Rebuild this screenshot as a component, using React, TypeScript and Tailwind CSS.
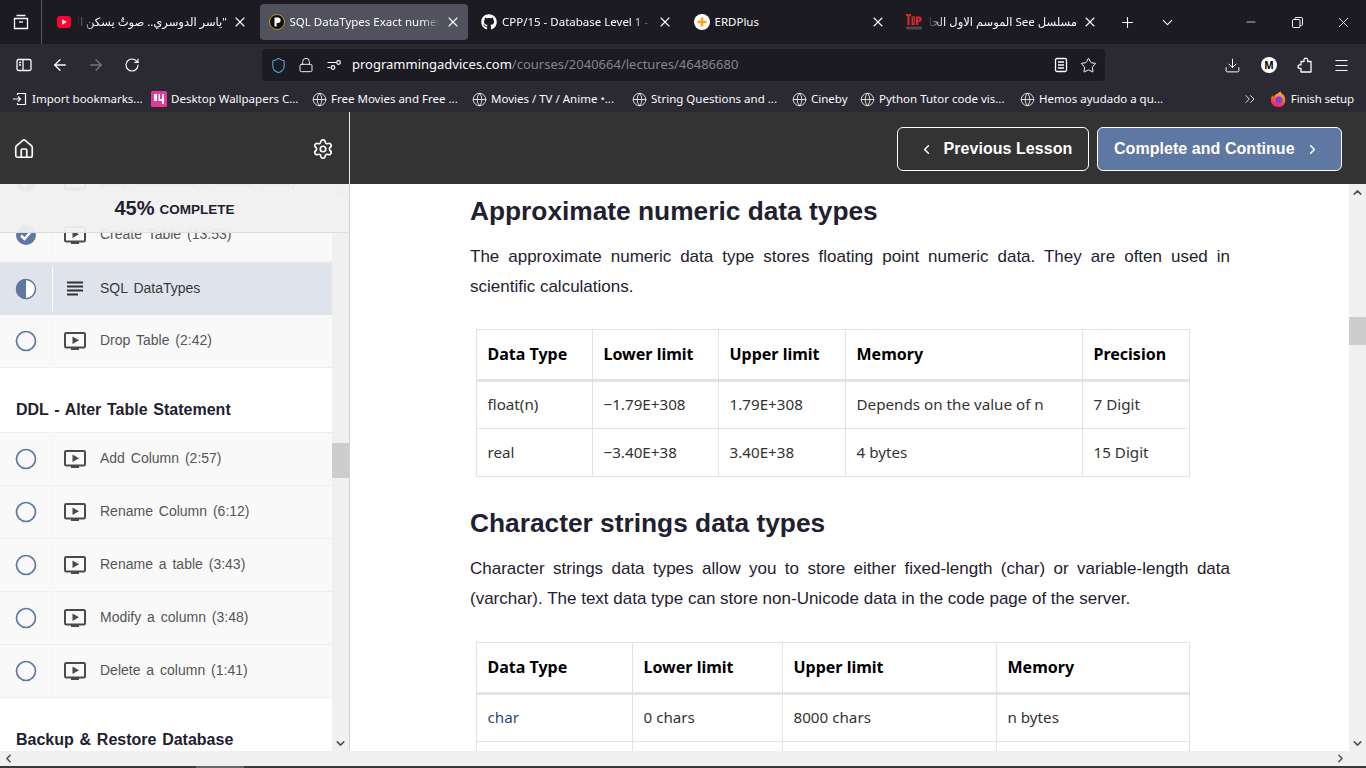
import React from "react";
import {
  ArrowLeft,
  ArrowRight,
  ChevronDown,
  ChevronLeft,
  ChevronRight,
  ChevronUp,
  ChevronsRight,
  Download,
  Globe,
  House,
  Lock,
  Menu,
  Minus,
  Plus,
  RotateCw,
  Settings,
  Shield,
  Star,
  X,
} from "lucide-react";
import { FaGithub } from "react-icons/fa";

const chromeFont = "font-['Noto_Sans','DejaVu_Sans',sans-serif]";

const YoutubeIcon = () => (
  <svg width="16" height="16" viewBox="0 0 16 16" className="shrink-0">
    <rect x="1" y="2" width="14" height="12" rx="3" fill="#ff0033" />
    <path d="M6.2 5.2 10.8 8l-4.6 2.8z" fill="#fff" />
  </svg>
);

const PIcon = () => (
  <svg width="16" height="16" viewBox="0 0 16 16" className="shrink-0">
    <circle cx="8" cy="8" r="7.5" fill="#111" stroke="#b8962e" strokeWidth="1" />
    <path d="M5.5 3.5h3.4a2.7 2.7 0 0 1 0 5.4H7.6v3.6H5.5z" fill="#fff" />
  </svg>
);

const ErdIcon = () => (
  <svg width="16" height="16" viewBox="0 0 16 16" className="shrink-0">
    <circle cx="8" cy="8" r="8" fill="#fff" />
    <path d="M8 3.5v9M3.5 8h9" stroke="#f5a623" strokeWidth="2.6" />
  </svg>
);

const TopIcon = () => (
  <svg width="16" height="16" viewBox="0 0 16 16" className="shrink-0">
    <path d="M0 0h5v2H3.600v9H1.400V2H0zM5.500 2.500h3.500v8.500H5.500zM7 4v5.500h.6V4zM10 2.500h3.500a2 2 0 0 1 2 2v1.500a2 2 0 0 1-2 2h-1.300v3H10zM12.200 4v2.500h1V4z" fill="#d9272e" fillRule="evenodd" />
    <rect x="0" y="12.500" width="16" height="3" rx="1" fill="#4a4a4f" />
  </svg>
);

const WallpaperIcon = () => (
  <svg width="16" height="16" viewBox="0 0 16 16" className="shrink-0">
    <rect width="16" height="16" rx="1.5" fill="#e5399a" />
    <path d="M3 3h3v7H3zM7.5 3H9v5h2V3h2v10h-2V10H7.500z" fill="#fff" />
  </svg>
);

const FirefoxIcon = () => (
  <svg width="16" height="16" viewBox="0 0 16 16" className="shrink-0">
    <defs>
      <linearGradient id="fx" x1="0.7" y1="0" x2="0.3" y2="1">
        <stop offset="0" stopColor="#ffbd2e" />
        <stop offset="0.55" stopColor="#ff5634" />
        <stop offset="1" stopColor="#e31587" />
      </linearGradient>
    </defs>
    <path d="M9.500 0.500c.4 1.800 1.600 2.300 3 3.600A7.300 7.300 0 1 1 1.500 4.300c.3 1 .7 1.400 1.300 1.700C3 3.500 6.500 3 9.500.5z" fill="url(#fx)" />
    <circle cx="8" cy="9" r="3.400" fill="#7542e5" />
  </svg>
);

const ImportIcon = () => (
  <svg width="16" height="16" viewBox="0 0 16 16" fill="none" stroke="#fbfbfe" strokeWidth="1.2" className="shrink-0">
    <path d="M5.500 4V2.500h8v11h-8V12" />
    <path d="M1 8h7.500M6 5.500 8.500 8 6 10.500" />
  </svg>
);

const ReaderIcon = () => (
  <svg width="16" height="16" viewBox="0 0 16 16" fill="none" stroke="#fbfbfe" strokeWidth="1.3">
    <rect x="2.500" y="1.500" width="11" height="13" rx="1.500" />
    <path d="M5 5h6M5 8h6M5 11h6" />
  </svg>
);

const TuneIcon = () => (
  <svg width="16" height="16" viewBox="0 0 16 16" fill="none" stroke="#fbfbfe" strokeWidth="1.2">
    <path d="M1.500 5.500h8.500M1.500 10.500h3" />
    <circle cx="12.500" cy="5.500" r="1.800" />
    <circle cx="7" cy="10.500" r="1.800" />
  </svg>
);

const SidebarIcon = () => (
  <svg width="16" height="16" viewBox="0 0 16 16" fill="none" stroke="#fbfbfe" strokeWidth="1.300">
    <rect x="1" y="2.500" width="14" height="11" rx="1.500" />
    <path d="M7 2.500v11M3 5.500h2M3 8h2" />
  </svg>
);

const TabsIcon = () => (
  <svg width="16" height="16" viewBox="0 0 16 16" fill="none" stroke="#fbfbfe" strokeWidth="1.300">
    <path d="M3.500 1.500h9M1.500 4.500h13v10h-13z" />
    <path d="M6 8h4" />
  </svg>
);

const RestoreIcon = () => (
  <svg width="11" height="11" viewBox="0 0 11 11" fill="none" stroke="#fbfbfe" strokeWidth="1">
    <rect x="0.500" y="2.500" width="7.500" height="8" rx="1" />
    <path d="M3 2.500V1.500a1 1 0 0 1 1-1h5.500a1 1 0 0 1 1 1v6a1 1 0 0 1-1 1H8" />
  </svg>
);

const PuzzleIcon = () => (
  <svg width="16" height="17" viewBox="0 0 16 17" fill="none" stroke="#fbfbfe" strokeWidth="1.300" strokeLinejoin="round">
    <path d="M4 4.500h3V3a1.800 1.800 0 0 1 3.600 0v1.500h3.400v10.500H4v-3.500H2.800a1.800 1.800 0 0 1 0-3.600H4z" />
  </svg>
);

const VideoIcon = () => (
  <svg width="22" height="20" viewBox="0 0 22 20" className="shrink-0">
    <rect x="1" y="2" width="20" height="14.500" rx="1.200" fill="none" stroke="#4a4a4a" strokeWidth="2" />
    <path d="M8.500 5.500 15 9.300 8.500 13z" fill="#4a4a4a" />
    <rect x="7" y="17" width="8" height="2" fill="#4a4a4a" />
  </svg>
);

const TextIcon = () => (
  <svg width="22" height="20" viewBox="0 0 22 20" className="shrink-0">
    <path d="M3 3.500h16M3 7.500h16M3 11.500h16M3 15.500h11" stroke="#333" strokeWidth="2" />
  </svg>
);

const StatusCircle = ({ status }: { status: "done" | "half" | "open" }) => (
  <svg width="22" height="22" viewBox="0 0 22 22" className="shrink-0">
    {status === "done" && (
      <>
        <circle cx="11" cy="11" r="10" fill="#5f77a3" />
        <path d="M6 11.500 9.500 15 16 7.500" fill="none" stroke="#fff" strokeWidth="2.500" />
      </>
    )}
    {status === "half" && (
      <>
        <circle cx="11" cy="11" r="9.500" fill="#fff" stroke="#5f77a3" strokeWidth="1.500" />
        <path d="M11 1a10 10 0 0 0 0 20z" fill="#5f77a3" />
      </>
    )}
    {status === "open" && <circle cx="11" cy="11" r="9.500" fill="none" stroke="#5f77a3" strokeWidth="1.700" />}
  </svg>
);

const Tab = ({
  icon,
  title,
  active,
  rtl,
  fade = true,
}: {
  icon: React.ReactNode;
  title: string;
  active?: boolean;
  rtl?: boolean;
  fade?: boolean;
}) => (
  <div
    className={`w-[208px] h-9 shrink-0 rounded flex items-center pl-[9px] pr-[7px] gap-[5px] ${
      active ? "bg-[#52525e]" : ""
    }`}
  >
    {icon}
    <div
      dir={rtl ? "rtl" : "ltr"}
      className={`flex-1 min-w-0 whitespace-nowrap text-[11.500px] text-[#fbfbfe] ${
        fade
          ? rtl
            ? "[mask-image:linear-gradient(to_left,black_88%,transparent)]"
            : "[mask-image:linear-gradient(to_right,black_88%,transparent)]"
          : ""
      }`}
    >
      {title}
    </div>
    <X size={16} strokeWidth={1.600} className="shrink-0 text-[#fbfbfe]" />
  </div>
);

const globe = <Globe size={15} strokeWidth={1.300} className="shrink-0 mx-[0.500px]" />;

const bookmarks = [
  { icon: <ImportIcon />, label: "Import bookmarks...", w: "w-[119px]" },
  { icon: <WallpaperIcon />, label: "Desktop Wallpapers C...", w: "w-[140px]" },
  { icon: globe, label: "Free Movies and Free ...", w: "w-[140px]" },
  { icon: globe, label: "Movies / TV / Anime •...", w: "w-[140px]" },
  { icon: globe, label: "String Questions and ...", w: "w-[140px]" },
  { icon: globe, label: "Cineby", w: "w-[48px]" },
  { icon: globe, label: "Python Tutor code vis...", w: "w-[140px]" },
  { icon: globe, label: "Hemos ayudado a qu...", w: "w-[125px]" },
];

const BrowserChrome = () => (
  <div className={`${chromeFont} text-[#fbfbfe] shrink-0`}>
    <div className="h-11 bg-[#1c1b22] flex items-center">
      <div className="w-[42px] h-full flex items-center justify-center border-r border-[#55555e] my-2 shrink-0">
        <TabsIcon />
      </div>
      <div className="flex items-center gap-[4.500px] pl-[5px]">
        <Tab rtl icon={<YoutubeIcon />} title={'"ياسر الدوسري.. صوتٌ يسكن ال'} />
        <Tab active icon={<PIcon />} title="SQL DataTypes Exact numeric" />
        <Tab icon={<FaGithub size={16} className="shrink-0 text-white" />} title="CPP/15 - Database Level 1 - S" />
        <Tab icon={<ErdIcon />} title="ERDPlus" fade={false} />
        <Tab rtl icon={<TopIcon />} title="مسلسل See الموسم الاول الحا" />
      </div>
      <Plus size={17} strokeWidth={1.500} className="ml-[14px]" />
      <ChevronDown size={17} strokeWidth={1.500} className="ml-[23px]" />
      <div className="ml-auto flex items-center h-full">
        <div className="w-[46px] flex justify-center"><Minus size={14} strokeWidth={1.200} /></div>
        <div className="w-[46px] flex justify-center"><RestoreIcon /></div>
        <div className="w-[46px] flex justify-center"><X size={17} strokeWidth={1.200} /></div>
      </div>
    </div>

    <div className="h-[42px] bg-[#2b2a33] flex items-center">
      <div className="flex items-center w-[262px] pl-4 shrink-0">
        <SidebarIcon />
        <ArrowLeft size={18} strokeWidth={1.700} className="ml-[19px]" />
        <ArrowRight size={18} strokeWidth={1.700} className="ml-[18px] text-[#76757c]" />
        <RotateCw size={16} strokeWidth={1.700} className="ml-[19px]" />
      </div>
      <div className="w-[843px] h-8 bg-[#1c1b22] rounded flex items-center pl-[8px] pr-[8px]">
        <Shield size={17} strokeWidth={1.500} className="text-[#4fa8dc]" />
        <Lock size={16} strokeWidth={1.400} className="ml-[11px]" />
        <div className="ml-[12px]"><TuneIcon /></div>
        <span className="ml-[10px] text-[13px] whitespace-nowrap">
          programmingadvices.com<span className="text-[#85848c]">/courses/2040664/lectures/46486680</span>
        </span>
        <div className="ml-auto"><ReaderIcon /></div>
        <Star size={17} strokeWidth={1.400} className="ml-[11px]" />
      </div>
      <div className="flex-1 flex items-center justify-end pr-[16px] gap-[20px]">
        <Download size={17} strokeWidth={1.400} />
        <div className="w-4 h-4 rounded-full bg-white text-black text-[10px] font-bold flex items-center justify-center">M</div>
        <PuzzleIcon />
        <Menu size={17} strokeWidth={1.400} />
      </div>
    </div>

    <div className="h-[26px] bg-[#2b2a33] flex items-center pl-[12px] pr-[12px] text-[11.500px]">
      {bookmarks.map((b) => (
        <div key={b.label} className="flex items-center gap-[4px]">
          {b.icon}
          <span className={`${b.w} whitespace-nowrap`}>{b.label}</span>
        </div>
      ))}
      <ChevronsRight size={16} strokeWidth={1.300} className="ml-auto" />
      <div className="flex items-center gap-[4px] ml-[13px]">
        <FirefoxIcon />
        <span className="whitespace-nowrap tracking-[-0.150px]">Finish setup</span>
      </div>
    </div>
  </div>
);

const Lesson = ({
  title,
  status = "open",
  selected,
  text,
}: {
  title: string;
  status?: "done" | "half" | "open";
  selected?: boolean;
  text?: boolean;
}) => (
  <div
    className={`h-[53px] flex items-center ${
      selected ? "bg-[#dfe3ec] border-t border-[#eeeeee] text-[#3a3a3a]" : "bg-[#f9f9f9] border-b border-[#eeeeee] text-[#555555]"
    }`}
  >
    <div className="w-[52px] flex justify-center shrink-0"><StatusCircle status={status} /></div>
    <div className={`w-px h-[44px] shrink-0 ${selected ? "bg-white" : "bg-[#f2f2f2]"}`} />
    <div className="ml-[11px] flex items-center">{text ? <TextIcon /> : <VideoIcon />}</div>
    <span className={`ml-[14px] text-[14px] [word-spacing:2px] whitespace-nowrap ${selected ? "-mt-[2px]" : "-mt-[1px]"}`}>{title}</span>
  </div>
);

const SectionTitle = ({ children }: { children: React.ReactNode }) => (
  <div className="h-[65px] bg-white border-b border-[#eeeeee] pl-4 pt-[32px] text-[16px] leading-5 font-bold text-[#1f2130] [word-spacing:1.300px] whitespace-nowrap">
    {children}
  </div>
);

const ScrollTrack = ({ thumbTop, thumbHeight, light }: { thumbTop: string; thumbHeight: string; light?: boolean }) => (
  <div className="w-[17px] h-full bg-[#f0f0f0] shrink-0 flex flex-col items-center">
    <ChevronUp size={13} strokeWidth={3} className={`mt-[2px] shrink-0 ${light ? "text-[#c9c9c9]" : "text-[#555555]"}`} />
    <div className={`${thumbTop} ${thumbHeight} w-full bg-[#cdcdcd] shrink-0`} />
    <ChevronDown size={13} strokeWidth={3} className="mt-auto mb-[1px] shrink-0 text-[#555555]" />
  </div>
);

const Sidebar = () => (
  <div className="w-[350px] h-full relative shrink-0 flex border-r border-[#d4d4d4] font-['Liberation_Sans',sans-serif]">
    <div className="flex-1 min-w-0 h-full overflow-hidden bg-white">
      <div className="-mt-[28px]">
        <Lesson title="Drop Database If Exists (3:05)" status="done" />
        <Lesson title="Create Table (13:53)" status="done" />
        <Lesson title="SQL DataTypes" status="half" selected text />
        <Lesson title="Drop Table (2:42)" />
        <SectionTitle>DDL - Alter Table Statement</SectionTitle>
        <Lesson title="Add Column (2:57)" />
        <Lesson title="Rename Column (6:12)" />
        <Lesson title="Rename a table (3:43)" />
        <Lesson title="Modify a column (3:48)" />
        <Lesson title="Delete a column (1:41)" />
        <SectionTitle>Backup &amp; Restore Database</SectionTitle>
      </div>
    </div>
    <ScrollTrack thumbTop="mt-[244px]" thumbHeight="h-[35px]" light />
    <div className="absolute top-0 left-0 right-0 h-[49px] bg-[#f0f0f0]/95 border-b border-[#dcdcdc] flex items-center justify-center gap-[5px] text-[#1f2130] font-bold">
      <span className="text-[20px] leading-none">45%</span>
      <span className="text-[13.500px] leading-none mt-[3px]">COMPLETE</span>
    </div>
  </div>
);

const Th = ({ children }: { children: React.ReactNode }) => (
  <th className="border border-[#e1e3e6] border-b-[3px] px-[10.500px] pb-[2px] text-left font-bold text-black text-[16px]">{children}</th>
);

const Td = ({ children, link }: { children: React.ReactNode; link?: boolean }) => (
  <td className={`border border-[#e1e3e6] px-[10.500px] pb-[1px] ${link ? "text-[#2c4a7c]" : "text-[#333333]"}`}>{children}</td>
);

const DataTable = ({
  widths,
  head,
  rows,
}: {
  widths: string[];
  head: string[];
  rows: string[][];
}) => (
  <table className="ml-[6px] w-[713px] table-fixed border-collapse font-['Noto_Sans',sans-serif] text-[15.200px]">
    <colgroup>
      {widths.map((w, i) => (
        <col key={i} className={w} />
      ))}
    </colgroup>
    <thead>
      <tr className="h-[51px]">
        {head.map((h) => (
          <Th key={h}>{h}</Th>
        ))}
      </tr>
    </thead>
    <tbody>
      {rows.map((r, i) => (
        <tr key={i} className="h-[48px]">
          {r.map((c, j) => (
            <Td key={j} link={j === 0 && r[0] === "char"}>{c}</Td>
          ))}
        </tr>
      ))}
    </tbody>
  </table>
);

const Article = () => (
  <div className="flex-1 min-w-0 h-full overflow-hidden bg-white pl-[120px] pt-[10px] font-['Liberation_Sans',sans-serif]">
    <div className="w-[760px]">
      <h2 className="text-[26.300px] leading-[34px] font-bold text-[#1f2130] whitespace-nowrap">Approximate numeric data types</h2>
      <p className="mt-[14px] text-[17px] leading-[30px] text-[#1f2130] text-justify">
        The approximate numeric data type stores floating point numeric data. They are often used in scientific calculations.
      </p>
      <div className="mt-[27px]">
        <DataTable
          widths={["w-[116px]", "w-[126px]", "w-[127px]", "w-[237px]", "w-[107px]"]}
          head={["Data Type", "Lower limit", "Upper limit", "Memory", "Precision"]}
          rows={[
            ["float(n)", "−1.79E+308", "1.79E+308", "Depends on the value of n", "7 Digit"],
            ["real", "−3.40E+38", "3.40E+38", "4 bytes", "15 Digit"],
          ]}
        />
      </div>
      <h2 className="mt-[29px] text-[26.300px] leading-[34px] font-bold text-[#1f2130] whitespace-nowrap">Character strings data types</h2>
      <p className="mt-[14px] text-[17px] leading-[30px] text-[#1f2130] text-justify">
        Character strings data types allow you to store either fixed-length (char) or variable-length data (varchar). The text data type can store non-Unicode data in the code page of the server.
      </p>
      <div className="mt-[28px]">
        <DataTable
          widths={["w-[156px]", "w-[150px]", "w-[214px]", "w-[193px]"]}
          head={["Data Type", "Lower limit", "Upper limit", "Memory"]}
          rows={[
            ["char", "0 chars", "8000 chars", "n bytes"],
            ["varchar", "0 chars", "8000 chars", "n bytes + 2 bytes"],
          ]}
        />
      </div>
    </div>
  </div>
);

const TopBar = () => (
  <div className="h-[72px] bg-[#333333] flex shrink-0 font-['Liberation_Sans',sans-serif] text-white">
    <div className="w-[350px] h-full flex items-center justify-between pl-[13px] pr-[15px] pt-[2px] border-r border-[#e8e8e8] shrink-0">
      <House size={22} strokeWidth={1.800} />
      <Settings size={22} strokeWidth={1.800} />
    </div>
    <div className="flex-1 flex items-center justify-end pr-[24px] pt-[2px] gap-2 text-[16px] font-bold tracking-[0.050px]">
      <button className="w-[192px] h-[44px] border border-white rounded-md flex items-center pl-[21px] gap-[9.500px]">
        <ChevronLeft size={15} strokeWidth={2.500} />
        Previous Lesson
      </button>
      <button className="w-[245px] h-[44px] border border-white rounded-md bg-[#5f77a3] flex items-center pl-[16px] gap-[10.500px]">
        Complete and Continue
        <ChevronRight size={15} strokeWidth={2.500} />
      </button>
    </div>
  </div>
);

export default function App() {
  return (
    <div className="w-[1366px] h-[768px] overflow-hidden flex flex-col bg-white">
      <BrowserChrome />
      <TopBar />
      <div className="flex-1 min-h-0 flex">
        <Sidebar />
        <Article />
        <ScrollTrack thumbTop="mt-[118px]" thumbHeight="h-[28px]" />
      </div>
      <div className="h-[15px] bg-[#f0f0f0] shrink-0 flex items-center justify-between pl-[2px] pr-[19px]">
        <ChevronLeft size={13} strokeWidth={3} className="text-[#555555]" />
        <ChevronRight size={13} strokeWidth={3} className="text-[#555555]" />
      </div>
      <div className="h-[2px] bg-[#3a3a3a] shrink-0 pl-[196px]">
        <div className="w-[48px] h-full bg-[#666666]" />
      </div>
    </div>
  );
}
